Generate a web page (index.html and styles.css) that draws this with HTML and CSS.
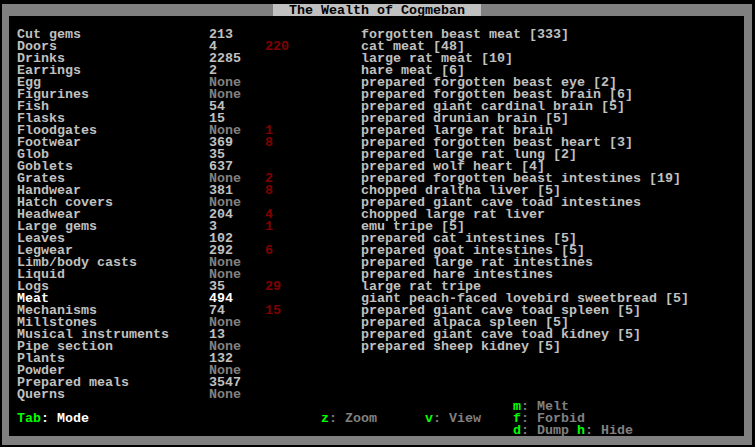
FILE: index.html
```html
<!DOCTYPE html>
<html lang="en">

<head>
    <meta charset="UTF-8">
    <title>The Wealth of Cogmeban</title>
    <link rel="stylesheet" href="styles.css">
</head>

<body>
    <div class="frame">
        <div class="titlebar"><span class="title">The Wealth of Cogmeban</span></div>
        <div class="screen">
            <div class="lists">
                <div class="stock">
                    <div class="row"><span>Cut gems</span><span>213</span><span></span></div>
                    <div class="row"><span>Doors</span><span>4</span><span class="red">220</span></div>
                    <div class="row"><span>Drinks</span><span>2285</span><span></span></div>
                    <div class="row"><span>Earrings</span><span>2</span><span></span></div>
                    <div class="row"><span>Egg</span><span class="none">None</span><span></span></div>
                    <div class="row"><span>Figurines</span><span class="none">None</span><span></span></div>
                    <div class="row"><span>Fish</span><span>54</span><span></span></div>
                    <div class="row"><span>Flasks</span><span>15</span><span></span></div>
                    <div class="row"><span>Floodgates</span><span class="none">None</span><span class="red">1</span></div>
                    <div class="row"><span>Footwear</span><span>369</span><span class="red">8</span></div>
                    <div class="row"><span>Glob</span><span>35</span><span></span></div>
                    <div class="row"><span>Goblets</span><span>637</span><span></span></div>
                    <div class="row"><span>Grates</span><span class="none">None</span><span class="red">2</span></div>
                    <div class="row"><span>Handwear</span><span>381</span><span class="red">8</span></div>
                    <div class="row"><span>Hatch covers</span><span class="none">None</span><span></span></div>
                    <div class="row"><span>Headwear</span><span>204</span><span class="red">4</span></div>
                    <div class="row"><span>Large gems</span><span>3</span><span class="red">1</span></div>
                    <div class="row"><span>Leaves</span><span>102</span><span></span></div>
                    <div class="row"><span>Legwear</span><span>292</span><span class="red">6</span></div>
                    <div class="row"><span>Limb/body casts</span><span class="none">None</span><span></span></div>
                    <div class="row"><span>Liquid</span><span class="none">None</span><span></span></div>
                    <div class="row"><span>Logs</span><span>35</span><span class="red">29</span></div>
                    <div class="row selected"><span>Meat</span><span>494</span><span></span></div>
                    <div class="row"><span>Mechanisms</span><span>74</span><span class="red">15</span></div>
                    <div class="row"><span>Millstones</span><span class="none">None</span><span></span></div>
                    <div class="row"><span>Musical instruments</span><span>13</span><span></span></div>
                    <div class="row"><span>Pipe section</span><span class="none">None</span><span></span></div>
                    <div class="row"><span>Plants</span><span>132</span><span></span></div>
                    <div class="row"><span>Powder</span><span class="none">None</span><span></span></div>
                    <div class="row"><span>Prepared meals</span><span>3547</span><span></span></div>
                    <div class="row"><span>Querns</span><span class="none">None</span><span></span></div>
                </div>
                <ul class="detail">
                    <li>forgotten beast meat [333]</li>
                    <li>cat meat [48]</li>
                    <li>large rat meat [10]</li>
                    <li>hare meat [6]</li>
                    <li>prepared forgotten beast eye [2]</li>
                    <li>prepared forgotten beast brain [6]</li>
                    <li>prepared giant cardinal brain [5]</li>
                    <li>prepared drunian brain [5]</li>
                    <li>prepared large rat brain</li>
                    <li>prepared forgotten beast heart [3]</li>
                    <li>prepared large rat lung [2]</li>
                    <li>prepared wolf heart [4]</li>
                    <li>prepared forgotten beast intestines [19]</li>
                    <li>chopped draltha liver [5]</li>
                    <li>prepared giant cave toad intestines</li>
                    <li>chopped large rat liver</li>
                    <li>emu tripe [5]</li>
                    <li>prepared cat intestines [5]</li>
                    <li>prepared goat intestines [5]</li>
                    <li>prepared large rat intestines</li>
                    <li>prepared hare intestines</li>
                    <li>large rat tripe</li>
                    <li>giant peach-faced lovebird sweetbread [5]</li>
                    <li>prepared giant cave toad spleen [5]</li>
                    <li>prepared alpaca spleen [5]</li>
                    <li>prepared giant cave toad kidney [5]</li>
                    <li>prepared sheep kidney [5]</li>
                </ul>
            </div>
            <div class="keys">
                <div class="k-melt"><span class="key">m</span>: Melt</div>
                <div class="k-tab"><span class="key">Tab</span><span class="on">: Mode</span></div>
                <div class="k-zoom"><span class="key">z</span>: Zoom</div>
                <div class="k-view"><span class="key">v</span>: View</div>
                <div class="k-forbid"><span class="key">f</span>: Forbid</div>
                <div class="k-dump"><span class="key">d</span>: Dump <span class="key">h</span>: Hide</div>
            </div>
        </div>
    </div>
</body>

</html>
```

FILE: styles.css
```css
body {
    background-color: black;
    margin: 0;
    padding: 0;
    font-family: "Liberation Mono", "DejaVu Sans Mono", monospace;
    font-size: 13.3333px;
    font-weight: bold;
    line-height: 12px;
    color: #c0c0c0;
    white-space: nowrap;
}

.frame {
    margin: 4px 0 0 2px;
    width: 750px;
    height: 441px;
    background-color: #808080;
    display: flex;
    flex-direction: column;
}

.titlebar {
    height: 12px;
    text-align: center;
}

.title {
    display: inline-block;
    height: 12px;
    box-sizing: border-box;
    padding: 1px 16px 0;
    line-height: 11px;
    background-color: #c0c0c0;
    color: black;
    vertical-align: top;
}

.screen {
    margin: 0 8px 9px 7px;
    height: 420px;
    background-color: black;
    padding: 13px 0 0 8px;
    box-sizing: border-box;
}

.lists {
    display: flex;
    height: 372px;
}

.stock {
    width: 344px;
}

.row {
    display: grid;
    grid-template-columns: 192px 56px 96px;
    height: 12px;
}

.none {
    color: #808080;
}

.red {
    color: #800000;
}

.selected {
    color: white;
}

.detail {
    list-style: none;
    margin: 0;
    padding: 0;
}

.detail li {
    height: 12px;
}

.keys {
    display: grid;
    grid-template-columns: 304px 104px 88px auto;
    grid-template-rows: 12px 12px 11px;
    color: #808080;
}

.key {
    color: #00ff00;
}

.on {
    color: white;
}

.k-melt { grid-area: 1 / 4; }
.k-tab { grid-area: 2 / 1; }
.k-zoom { grid-area: 2 / 2; }
.k-view { grid-area: 2 / 3; }
.k-forbid { grid-area: 2 / 4; }
.k-dump { grid-area: 3 / 4; }
```
